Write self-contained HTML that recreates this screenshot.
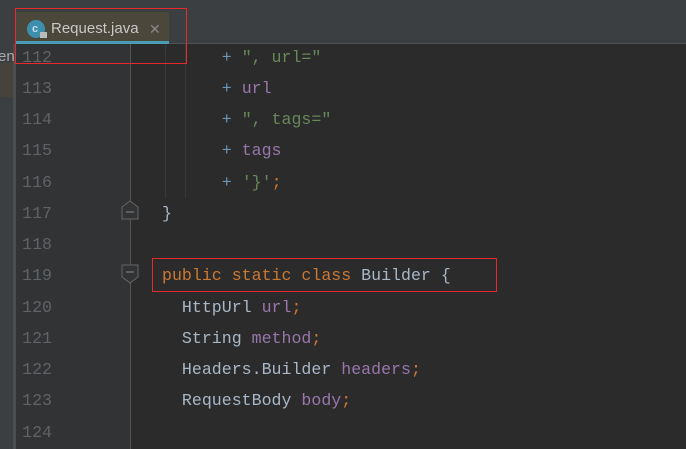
<!DOCTYPE html>
<html><head><meta charset="utf-8"><style>
body{margin:0;width:686px;height:449px;overflow:hidden;background:#2b2b2b;position:relative;font-family:"Liberation Mono",monospace}
div{position:absolute}
.ln{left:16px;width:36px;text-align:right;color:#606366;font-size:16.6px;height:31.25px;line-height:31.25px}
.cd{left:162px;color:#a9b7c6;font-size:16.6px;height:31.25px;line-height:31.25px;white-space:pre}
.k{color:#cc7832}.s{color:#6a8759}.f{color:#9876aa}.p{color:#6897bb}
</style></head><body>
<div style="left:0;top:0;width:686px;height:44px;background:#3c3f41"></div>
<div style="left:169px;top:43px;width:517px;height:1px;background:#515151"></div>
<div style="left:16px;top:12px;width:153px;height:32px;background:#4b473b"></div>
<div style="left:16px;top:41px;width:153px;height:3px;background:#4a9cb5"></div>
<div style="left:27px;top:20px;width:18px;height:18px;border-radius:50%;background:#3d8fae"></div>
<div style="left:32px;top:20px;font:bold 11px 'Liberation Sans',sans-serif;color:#cde;line-height:18px">c</div>
<div style="left:40px;top:32px;width:7px;height:6px;background:#bbb"></div>
<div style="left:51px;top:17px;font:15px 'Liberation Sans',sans-serif;color:#c8c8c8;line-height:24px">Request.java</div>
<div style="left:149px;top:17px;font:14px 'Liberation Sans',sans-serif;color:#888;line-height:24px">✕</div>
<div style="left:0;top:44px;width:13px;height:405px;background:#3c3f41"></div>
<div style="left:0;top:63px;width:13px;height:34px;background:#46443a"></div>
<div style="left:13px;top:44px;width:3px;height:405px;background:#4b4d4f"></div>
<div style="left:0;top:46px;font:15px 'Liberation Sans',sans-serif;color:#aaa;line-height:22px;width:16px;overflow:hidden;text-indent:-7px">ren</div>
<div style="left:16px;top:44px;width:114px;height:405px;background:#313335"></div>
<div style="left:130px;top:44px;width:1px;height:405px;background:#555"></div>
<div style="left:165px;top:44px;width:1px;height:154px;background:#393939"></div>
<div style="left:185px;top:44px;width:1px;height:154px;background:#393939"></div>
<div style="left:121px;top:200px;width:18px;height:20px"><svg width="18" height="20"><path d="M1 7L9 1L17 7V19H1Z" fill="#313335" stroke="#666"/><path d="M5 12H13" stroke="#888"/></svg></div>
<div style="left:121px;top:264px;width:18px;height:20px"><svg width="18" height="20"><path d="M1 1H17V13L9 19L1 13Z" fill="#313335" stroke="#666"/><path d="M5 8H13" stroke="#888"/></svg></div>
<div class="ln" style="top:41.5px">112</div><div class="ln" style="top:72.75px">113</div><div class="ln" style="top:104px">114</div><div class="ln" style="top:135.25px">115</div><div class="ln" style="top:166.5px">116</div><div class="ln" style="top:197.75px">117</div><div class="ln" style="top:229px">118</div><div class="ln" style="top:260.25px">119</div><div class="ln" style="top:291.5px">120</div><div class="ln" style="top:322.75px">121</div><div class="ln" style="top:354px">122</div><div class="ln" style="top:385.25px">123</div><div class="ln" style="top:416.5px">124</div>
<div class="cd" style="top:41.5px">      <span class="p">+</span> <span class="s">", url="</span></div>
<div class="cd" style="top:72.75px">      <span class="p">+</span> <span class="f">url</span></div>
<div class="cd" style="top:104px">      <span class="p">+</span> <span class="s">", tags="</span></div>
<div class="cd" style="top:135.25px">      <span class="p">+</span> <span class="f">tags</span></div>
<div class="cd" style="top:166.5px">      <span class="p">+</span> <span class="s">'}'</span><span class="k">;</span></div>
<div class="cd" style="top:197.75px">}</div>
<div class="cd" style="top:260.25px"><span class="k">public static class</span> Builder {</div>
<div class="cd" style="top:291.5px">  HttpUrl <span class="f">url</span><span class="k">;</span></div>
<div class="cd" style="top:322.75px">  String <span class="f">method</span><span class="k">;</span></div>
<div class="cd" style="top:354px">  Headers.Builder <span class="f">headers</span><span class="k">;</span></div>
<div class="cd" style="top:385.25px">  RequestBody <span class="f">body</span><span class="k">;</span></div>
<div style="left:15px;top:8px;width:170px;height:54px;border:1px solid #e8292b"></div>
<div style="left:152px;top:258px;width:343px;height:32px;border:1px solid #e8292b"></div>
</body></html>
